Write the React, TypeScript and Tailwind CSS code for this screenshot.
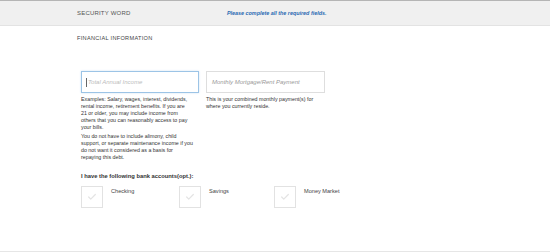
import { Check } from "lucide-react"

const font = { fontFamily: '"Liberation Sans", Arial, sans-serif' }

function Box({ label, className }: { label: string; className?: string }) {
  return (
    <div className={`flex items-start ${className ?? ""}`}>
      <div className="flex h-[22px] w-[22px] items-center justify-center border border-[#e2e2e2] bg-white">
        <Check className="h-[10px] w-[10px] text-[#e4e4e4]" strokeWidth={3} />
      </div>
      <span className="ml-[8px] mt-[1px] text-[5.6px] text-[#444]">{label}</span>
    </div>
  )
}

function Lines({ lines }: { lines: string[] }) {
  return (
    <p className="whitespace-nowrap">
      {lines.map((l) => (
        <span key={l} className="block">
          {l}
        </span>
      ))}
    </p>
  )
}

export default function App() {
  return (
    <div className="h-[252px] w-[550px] overflow-hidden bg-white" style={font}>
      {/* header strip */}
      <div className="flex h-[26px] items-center border-t border-[#b5b5b5] border-b border-b-[#e3e3e3] bg-[#f0f0f0] pl-[77px]">
        <span className="w-[150px] pt-px text-[6px] tracking-[0.2px] text-[#555]">SECURITY WORD</span>
        <span className="pt-px text-[5.4px] font-bold italic text-[#2a6ab3]">Please complete all the required fields.</span>
      </div>

      <div className="pl-[77px] pt-[8px]">
        <h2 className="text-[5.6px] leading-[8px] tracking-[0.3px] text-[#444]">FINANCIAL INFORMATION</h2>
      </div>

      <div className="h-[210px] border-b border-[#e6e6e6] pl-[81px] pt-[29px]">
        <div className="flex gap-[7px]">
          <div className="w-[118px]">
            <div className="flex h-[22px] items-center border border-[#9cc4e6] px-[4px] shadow-[0_0_2px_#cfe2f3]">
              <span className="mr-[1px] h-[9px] w-px bg-[#666]" />
              <span className="text-[6px] italic text-[#bbb]">Total Annual Income</span>
            </div>
            <div className="mt-[3px] space-y-[2px] text-[5.3px] leading-[7px] text-[#333]">
              <Lines
                lines={[
                  "Examples: Salary, wages, interest, dividends,",
                  "rental income, retirement benefits. If you are",
                  "21 or older, you may include income from",
                  "others that you can reasonably access to pay",
                  "your bills.",
                ]}
              />
              <Lines
                lines={[
                  "You do not have to include alimony, child",
                  "support, or separate maintenance income if you",
                  "do not want it considered as a basis for",
                  "repaying this debt.",
                ]}
              />
            </div>
          </div>
          <div className="w-[119px]">
            <div className="flex h-[22px] items-center border border-[#dedede] px-[5px]">
              <span className="text-[6px] italic text-[#999]">Monthly Mortgage/Rent Payment</span>
            </div>
            <div className="mt-[3px] text-[5.3px] leading-[7px] text-[#333]">
              <Lines lines={["This is your combined monthly payment(s) for", "where you currently reside."]} />
            </div>
          </div>
        </div>

        <p className="mt-[11px] text-[5.8px] font-bold text-[#333]">I have the following bank accounts(opt.):</p>

        <div className="mt-[5px] flex">
          <Box label="Checking" className="w-[98px]" />
          <Box label="Savings" className="w-[95px]" />
          <Box label="Money Market" />
        </div>
      </div>
    </div>
  )
}
